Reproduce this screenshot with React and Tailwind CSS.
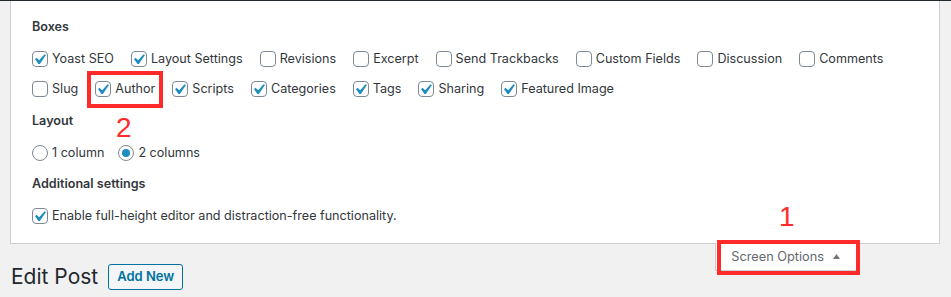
import React from 'react';

const boxRows = [
    [
        ['Yoast SEO', true],
        ['Layout Settings', true],
        ['Revisions', false],
        ['Excerpt', false],
        ['Send Trackbacks', false],
        ['Custom Fields', false],
        ['Discussion', false],
        ['Comments', false],
    ],
    [
        ['Slug', false],
        ['Author', true],
        ['Scripts', true],
        ['Categories', true],
        ['Tags', true],
        ['Sharing', true],
        ['Featured Image', true],
    ],
];

const Checkbox = ({ checked }) => (
    <span className="relative block w-4 h-4 shrink-0 rounded-[4px] border border-[#7e8993] bg-white">
        {checked && (
            <svg viewBox="0 0 20 20" className="absolute left-[-4px] top-[-3px] w-[21px] h-[21px]" fill="#1e8cbe">
                <path d="M14.83 4.89l1.34.94-5.81 8.38H9.02L5.78 9.67l1.34-1.25 2.57 2.4z" />
            </svg>
        )}
    </span>
);

const Radio = ({ checked }) => (
    <span className="flex items-center justify-center w-4 h-4 shrink-0 rounded-full border border-[#7e8993] bg-white">
        {checked && <span className="w-2 h-2 rounded-full bg-[#1e8cbe]" />}
    </span>
);

const Option = ({ label, checked }) => (
    <label className="flex items-center gap-[4px]">
        <Checkbox checked={checked} />
        <span>{label}</span>
    </label>
);

const App = () => {
    return (
        <div className="relative w-[951px] h-[297px] overflow-hidden bg-[#f1f1f1] border-t border-[#23282d] font-['Inter',sans-serif] text-[12.6px] text-[#32373c]">
            <div className="ml-[10px] w-[930px] bg-white border-x border-b border-[#ccd0d4] pl-[21px] pt-[17px] pb-[12px]">
                <h5 className="h-[18px] leading-[18px] font-semibold">Boxes</h5>
                <div className="mt-2">
                    {boxRows.map((row, i) => (
                        <div key={i} className="flex items-center h-[30px] gap-[17px]">
                            {row.map(([label, checked]) => (
                                <Option key={label} label={label} checked={checked} />
                            ))}
                        </div>
                    ))}
                </div>

                <h5 className="mt-2 h-[18px] leading-[18px] font-semibold">Layout</h5>
                <div className="mt-2 flex items-center h-[30px] gap-[14px]">
                    <label className="flex items-center gap-[4px]">
                        <Radio checked={false} />
                        <span>1 column</span>
                    </label>
                    <label className="flex items-center gap-[4px]">
                        <Radio checked />
                        <span>2 columns</span>
                    </label>
                </div>

                <h5 className="mt-[7px] h-[18px] leading-[18px] font-semibold">Additional settings</h5>
                <div className="mt-2 flex items-center h-[30px]">
                    <Option label="Enable full-height editor and distraction-free functionality." checked />
                </div>
            </div>

            <div className="flex justify-between items-start">
                <div className="flex items-center pl-[11px] pt-[19px]">
                    <h1 className="text-[21px] leading-[28px] text-[#23282d]">Edit Post</h1>
                    <button className="ml-[10px] h-[26px] px-[8px] rounded-[3px] border border-[#0071a1] bg-[#f3f5f6] text-[#0071a1] font-semibold text-[13px]">
                        Add New
                    </button>
                </div>
                <button className="-mt-px mr-[93px] h-[28px] flex items-center pl-[15px] pr-[17px] bg-white border-x border-b border-[#ccd0d4] text-[#646970] text-[12.75px]">
                    <span>Screen Options</span>
                    <svg width="7" height="5" viewBox="0 0 7 5" className="ml-[9px]" fill="#72777c">
                        <path d="M0 5 L3.5 0 L7 5 Z" />
                    </svg>
                </button>
            </div>

            {/* annotations */}
            <div className="absolute left-[87px] top-[70px] w-[76px] h-[37px] border-4 border-[#ff2b2b]" />
            <div className="absolute left-[116px] top-[113px] font-['Liberation_Sans',sans-serif] text-[28px] leading-[28px] text-[#ff2b2b]">2</div>
            <div className="absolute left-[717px] top-[239px] w-[143px] h-[35px] border-4 border-[#ff2b2b]" />
            <div className="absolute left-[779px] top-[202px] font-['Liberation_Sans',sans-serif] text-[28px] leading-[28px] text-[#ff2b2b]">1</div>
        </div>
    );
};

export default App;
